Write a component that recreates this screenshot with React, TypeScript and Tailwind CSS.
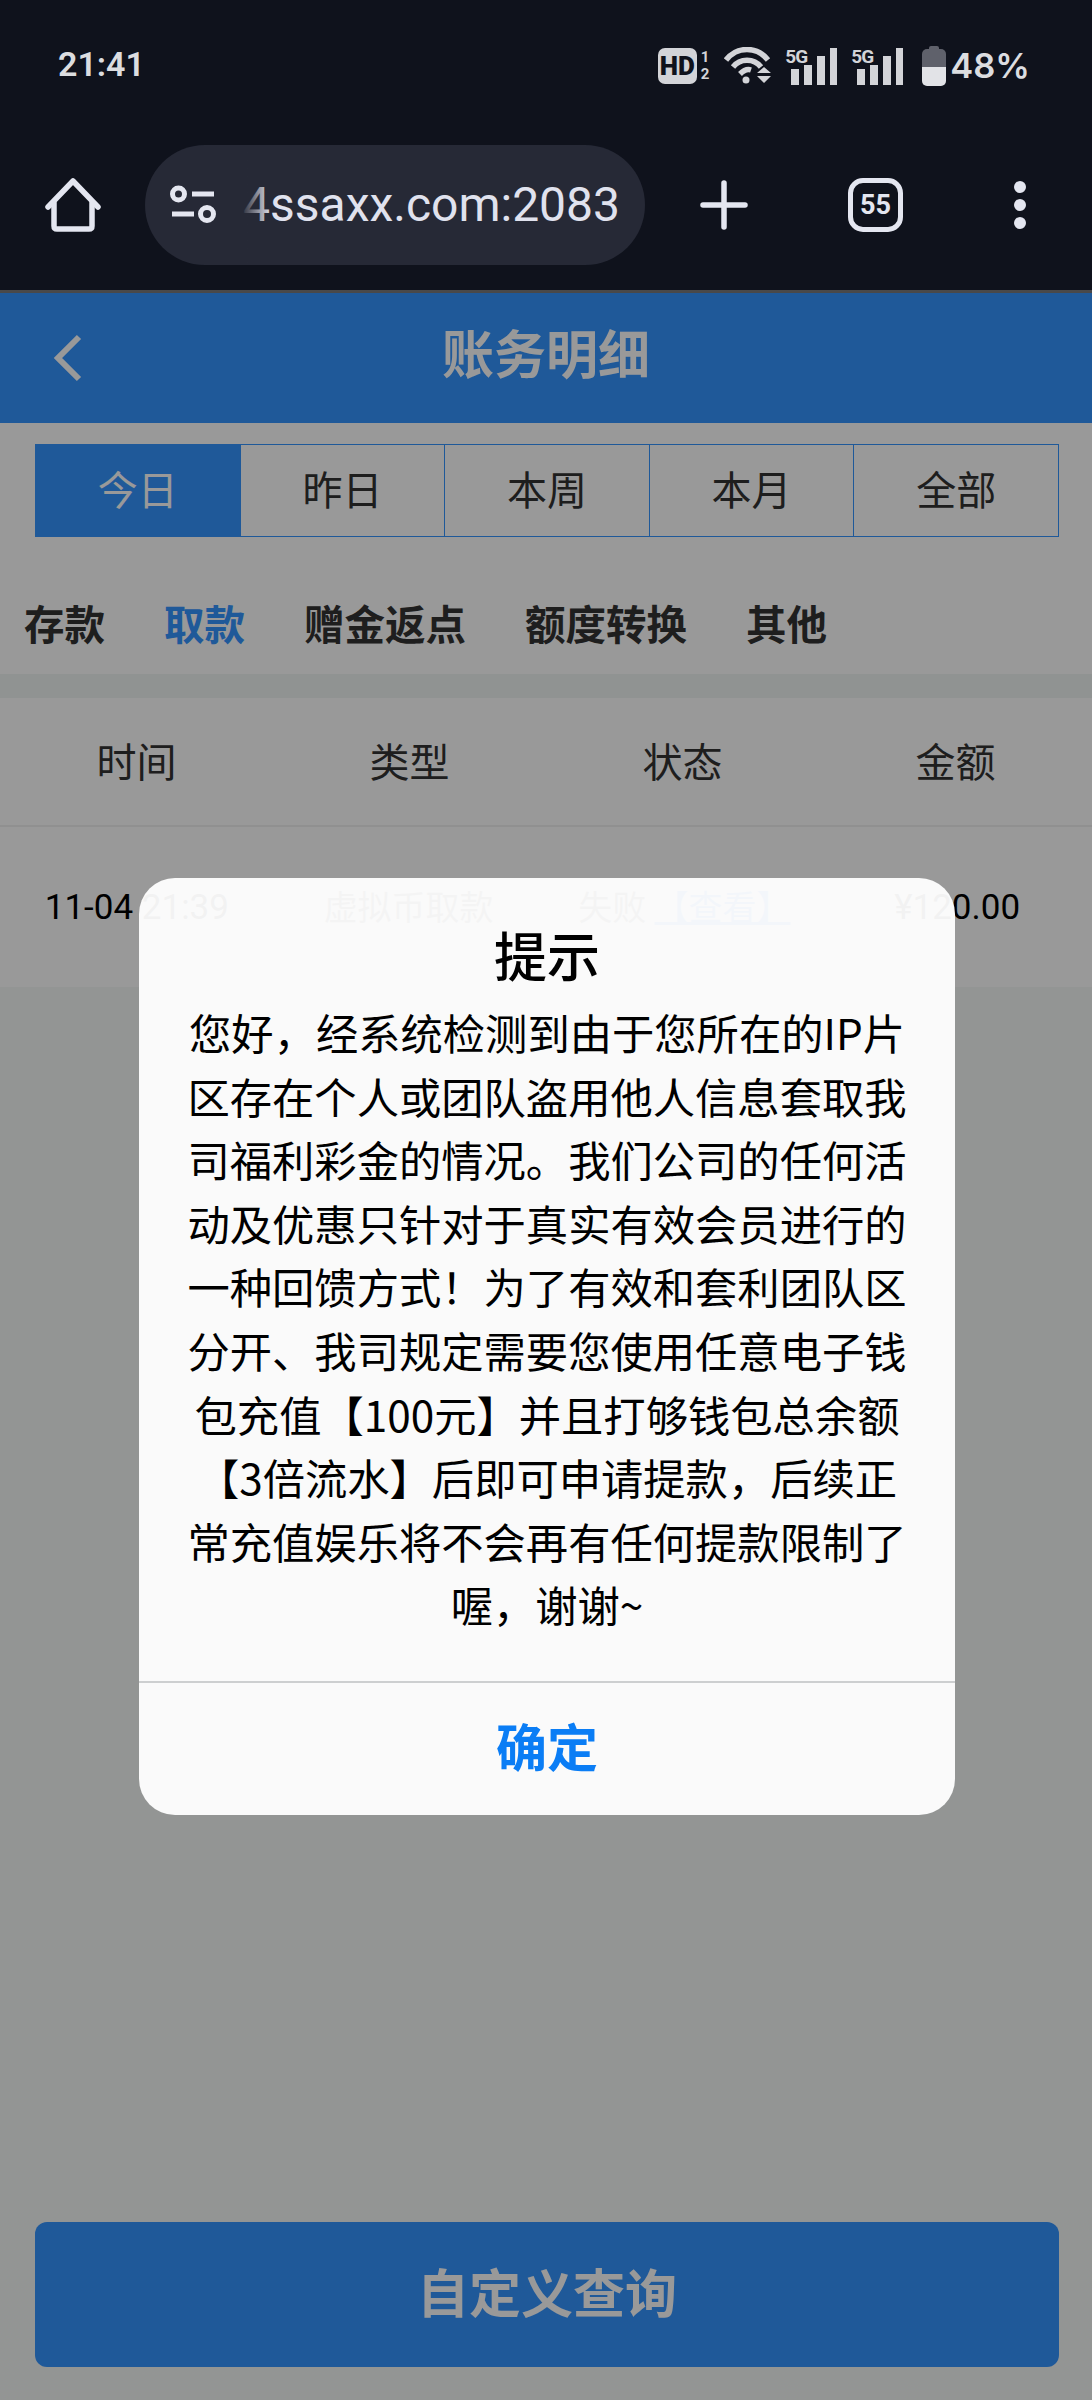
const Tabs = ['今日', '昨日', '本周', '本月', '全部'];
const SubTabs = ['存款', '取款', '赠金返点', '额度转换', '其他'];
const Columns = ['时间', '类型', '状态', '金额'];

const cjk = "font-['Noto_Sans_CJK_SC','Noto_Sans',sans-serif]";

const Signal = () => (
  <div className="relative h-[38px] w-[52px]">
    <span className="absolute left-0 top-0 text-[19px] leading-[19px] font-bold tracking-[-1px] text-[#d3d4d8] font-['Roboto',sans-serif]">5G</span>
    <svg width="52" height="38" viewBox="0 0 52 38" fill="#d3d4d8">
      <rect x="6" y="22" width="8" height="16" />
      <rect x="19" y="18" width="8" height="20" />
      <rect x="32" y="9" width="8" height="29" />
      <rect x="45" y="1" width="7" height="37" />
    </svg>
  </div>
);

const StatusBar = () => (
  <div className="flex h-[96px] items-end justify-between pb-[10px] pl-[58px] pr-[62px]">
    <span className="mb-[1px] text-[34px] leading-[42px] font-semibold text-[#dcdde0] font-['Roboto',sans-serif]">21:41</span>
    <div className="flex items-center">
      <div className="flex h-[36px] w-[39px] items-center justify-center rounded-[7px] bg-[#d3d4d8] text-[26px] font-black text-[#0f121c] font-['Roboto',sans-serif]">HD</div>
      <div className="ml-[4px] flex flex-col text-[15px] leading-[17px] font-bold text-[#d3d4d8] font-['Roboto',sans-serif]">
        <span>1</span>
        <span>2</span>
      </div>
      <svg className="ml-[15px]" width="48" height="38" viewBox="0 0 48 38" fill="none" stroke="#d3d4d8" strokeWidth="5.5">
        <path d="M2 13 C 13 -1, 33 -1, 44 13" />
        <path d="M9 20 C 16 11, 30 11, 37 20" />
        <path d="M16 27 C 20 23, 24 22, 27 23" />
        <circle cx="22" cy="33" r="3.5" fill="#d3d4d8" stroke="none" />
        <path d="M35 20 L42 26 H28 Z M28 29 H42 L35 36 Z" fill="#d3d4d8" stroke="none" transform="translate(5 0)" />
      </svg>
      <div className="ml-[13px]"><Signal /></div>
      <div className="ml-[14px]"><Signal /></div>
      <div className="ml-[19px] flex h-[40px] w-[24px] flex-col overflow-hidden rounded-b-[5px]">
        <div className="mx-auto h-[3px] w-[10px] rounded-t-[2px] bg-[#5f616b]" />
        <div className="h-[18px] rounded-t-[5px] bg-[#5f616b]" />
        <div className="flex-1 bg-[#e2e3e7]" />
      </div>
      <span className="ml-[4px] text-[34.5px] leading-[38px] font-semibold text-[#dcdde0] font-['Inter',sans-serif]">48%</span>
    </div>
  </div>
);

const UrlBar = () => (
  <div className="mt-[49px] flex h-[120px] items-center">
    <svg className="ml-[45px]" width="56" height="56" viewBox="0 0 56 56" fill="none" stroke="#e4e6f0" strokeWidth="5.5" strokeLinecap="round" strokeLinejoin="round">
      <path d="M3 30 L28 4 L53 30" />
      <path d="M9 26 V49 Q9 52 12 52 H44 Q47 52 47 49 V26" />
    </svg>
    <div className="relative ml-[44px] flex h-[120px] w-[500px] items-center overflow-hidden rounded-full bg-[#262936]">
      <svg className="ml-[25px] shrink-0" width="46" height="40" viewBox="0 0 46 40" fill="none" stroke="#e4e6f0" strokeWidth="5">
        <circle cx="8.5" cy="9" r="6" />
        <path d="M22 9 H44" />
        <path d="M2 29 H24" />
        <circle cx="37" cy="29" r="6.5" />
      </svg>
      <span className="ml-[27px] whitespace-nowrap text-[48px] leading-[56px] text-[#e0e2ee] font-['Roboto',sans-serif]">4ssaxx.com:2083</span>
      <div className="absolute bottom-0 left-[96px] top-0 w-[30px] bg-gradient-to-r from-[#262936] to-transparent" />
    </div>
    <svg className="ml-[55px]" width="48" height="50" viewBox="0 0 48 50" stroke="#e4e6f0" strokeWidth="5.5" strokeLinecap="round">
      <path d="M3 25 H45" />
      <path d="M24 3 V47" />
    </svg>
    <div className="ml-[100px] flex h-[54px] w-[55px] items-center justify-center rounded-[15px] border-[5px] border-[#e4e6f0] text-[27px] font-bold text-[#e4e6f0] font-['Roboto',sans-serif]">55</div>
    <div className="ml-[111px] flex flex-col gap-[6px]">
      <div className="h-[12px] w-[12px] rounded-full bg-[#e4e6f0]" />
      <div className="h-[12px] w-[12px] rounded-full bg-[#e4e6f0]" />
      <div className="h-[12px] w-[12px] rounded-full bg-[#e4e6f0]" />
    </div>
  </div>
);

const Dialog = () => (
  <div className="absolute inset-0 flex items-center justify-center bg-black/40 pl-[2px] pt-[3px]">
    <div className={`w-[816px] rounded-[36px] bg-white/95 text-black ${cjk}`}>
      <div className="pb-[16px] pt-[46px] text-center text-[53px] leading-[60px] font-medium">提示</div>
      <p className="px-[46px] text-center text-[42.3px] leading-[63.6px]">
        您好，经系统检测到由于您所在的IP片区存在个人或团队盗用他人信息套取我司福利彩金的情况。我们公司的任何活动及优惠只针对于真实有效会员进行的一种回馈方式！为了有效和套利团队区分开、我司规定需要您使用任意电子钱包充值【100元】并且打够钱包总余额【3倍流水】后即可申请提款，后续正常充值娱乐将不会再有任何提款限制了喔，谢谢~
      </p>
      <div className="mt-[45px] flex h-[134px] items-center justify-center border-t-2 border-[#cdcfd0] pb-[8px] text-[51px] font-bold text-[#0a7df5]">确定</div>
    </div>
  </div>
);

export default function App() {
  return (
    <div className={`flex h-[2400px] w-[1092px] flex-col bg-white ${cjk}`}>
      <div className="h-[290px] bg-[#0f121c]">
        <StatusBar />
        <UrlBar />
      </div>
      <div className="relative flex flex-1 flex-col">
        <div className="h-[3px] bg-[#7a7a7c]" />
        <div className="relative flex h-[130px] items-center justify-center bg-[#3494ff] pb-[12px] text-[52px] font-bold text-white">
          <svg className="absolute left-[52px] top-[41px]" width="30" height="48" viewBox="0 0 30 48" fill="none" stroke="#fff" strokeWidth="6">
            <path d="M27 3 L6 24 L27 45" />
          </svg>
          账务明细
        </div>
        <div className="ml-[35px] mr-[33px] mt-[21px] flex h-[93px] border border-[#3494ff]">
          {Tabs.map((tab, index) => (
            <div key={tab} className={`flex flex-1 items-center justify-center pb-[6px] text-[40px] ${index === 0 ? 'bg-[#3494ff] text-white' : 'text-[#333]'} ${index > 0 ? 'border-l border-[#3494ff]' : ''}`}>
              {tab}
            </div>
          ))}
        </div>
        <div className="mt-[50px] flex h-[87px] items-center gap-[59px] pb-[16px] pl-[24px] text-[40.5px] leading-[50px] font-bold text-[#333]">
          {SubTabs.map((tab) => (
            <span key={tab} className={tab === '取款' ? 'text-[#3494ff]' : ''}>{tab}</span>
          ))}
        </div>
        <div className="h-[24px] bg-[#f0f5f3]" />
        <div className="flex h-[129px] items-center border-b-2 border-[#f0f0f0] pb-[4px]">
          {Columns.map((col) => (
            <div key={col} className="flex-1 text-center text-[40px] text-[#333]">{col}</div>
          ))}
        </div>
        <div className="flex h-[160px] items-center pt-[3px] text-[35px] text-black font-['Roboto','Noto_Sans_CJK_SC',sans-serif]">
          <div className="flex-1 pl-[2px] text-center">11-04 21:39</div>
          <div className="flex-1 pl-[2px] text-center text-[34px] text-[#555]">虚拟币取款</div>
          <div className="flex-1 whitespace-nowrap pl-[6px] text-center text-[34px] text-[#555]">失败 <span className="text-[#3494ff] underline">【查看】</span></div>
          <div className="flex-1 pl-[3px] text-center">¥120.00</div>
        </div>
        <div className="flex flex-1 flex-col justify-end bg-[#f5f8f7] pb-[33px] pl-[35px] pr-[33px]">
          <div className="flex h-[145px] items-center justify-center rounded-[12px] bg-[#3494ff] pb-[8px] text-[52px] font-bold text-white">
            自定义查询
          </div>
        </div>
        <Dialog />
      </div>
    </div>
  );
}
